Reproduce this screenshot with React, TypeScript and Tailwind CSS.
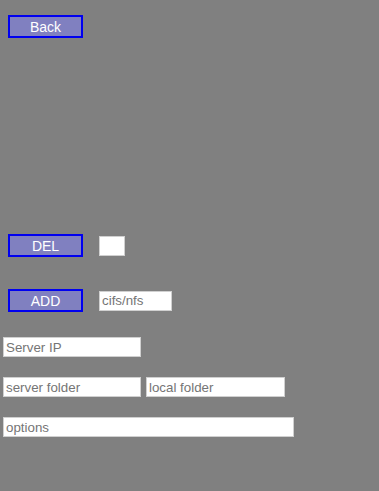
import React from 'react';

// Plain old-style control page: blue-bordered buttons and white text boxes on gray
const btn =
    "w-[75px] h-[23px] bg-[#8080c0] border-2 border-[#0000f0] text-white text-[14px] leading-none flex items-center justify-center";

const field =
    "h-[20px] bg-white border border-[#d0d0d0] px-[2px] text-[13.33px] text-[#555] placeholder:text-[#757575] outline-none";

export default function App() {
    return (
        <div className="w-[379px] h-[491px] bg-[#808080] font-['Liberation_Sans',Arial,sans-serif] flex flex-col">
            <div className="pt-[15px] pl-[8px]">
                <button className={btn}>Back</button>
            </div>

            <div className="mt-[196px] pl-[8px] flex items-center gap-[16px]">
                <button className={btn}>DEL</button>
                <input className={`${field} w-[26px]`} />
            </div>

            <div className="mt-[32px] pl-[8px] flex items-center gap-[16px]">
                <button className={btn}>ADD</button>
                <input className={`${field} w-[73px]`} placeholder="cifs/nfs" />
            </div>

            <div className="mt-[25px] pl-[3px] flex flex-col gap-[20px]">
                <input className={`${field} w-[138px]`} placeholder="Server IP" />
                <div className="flex gap-[5px]">
                    <input className={`${field} w-[138px]`} placeholder="server folder" />
                    <input className={`${field} w-[139px]`} placeholder="local folder" />
                </div>
                <input className={`${field} w-[291px]`} placeholder="options" />
            </div>
        </div>
    );
}
